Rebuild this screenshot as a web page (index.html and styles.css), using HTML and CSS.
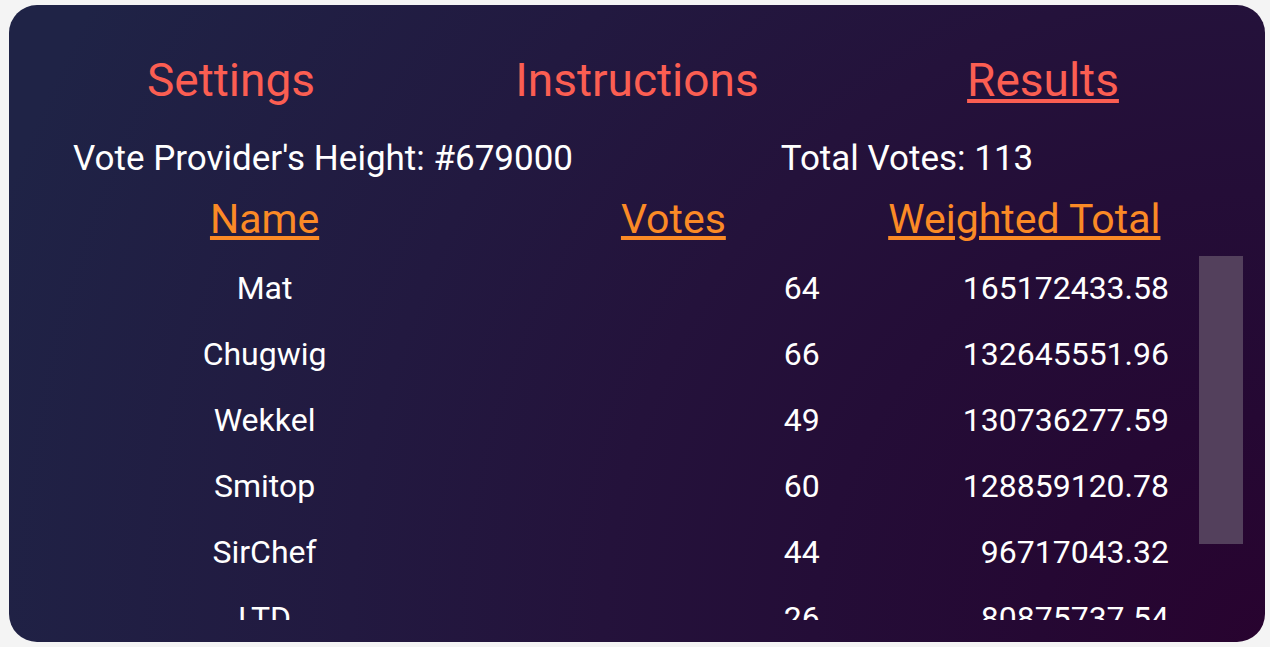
FILE: index.html
```html
<!DOCTYPE html>
<html lang="en">
<head>
<meta charset="utf-8">
<title>Vote Results</title>
<link rel="stylesheet" href="styles.css">
</head>
<body>
<main class="panel">
  <nav class="tabs">
    <a class="tab" href="#settings">Settings</a>
    <a class="tab" href="#instructions">Instructions</a>
    <a class="tab tab-active" href="#results" aria-current="page">Results</a>
  </nav>
  <div class="summary">
    <p class="stat">Vote Provider's Height: #679000</p>
    <p class="stat">Total Votes: 113</p>
  </div>
  <div class="results">
    <table class="votes">
      <thead>
        <tr><th class="name">Name</th><th class="count">Votes</th><th class="total">Weighted Total</th></tr>
      </thead>
      <tbody>
        <tr><td class="name">Mat</td><td class="count">64</td><td class="total">165172433.58</td></tr>
        <tr><td class="name">Chugwig</td><td class="count">66</td><td class="total">132645551.96</td></tr>
        <tr><td class="name">Wekkel</td><td class="count">49</td><td class="total">130736277.59</td></tr>
        <tr><td class="name">Smitop</td><td class="count">60</td><td class="total">128859120.78</td></tr>
        <tr><td class="name">SirChef</td><td class="count">44</td><td class="total">96717043.32</td></tr>
        <tr><td class="name">LTD</td><td class="count">26</td><td class="total">80875737.54</td></tr>
      </tbody>
    </table>
    <div class="track"><div class="thumb"></div></div>
  </div>
</main>
</body>
</html>
```

FILE: styles.css
```css
* { box-sizing: border-box; }
body {
  margin: 0;
  height: 100vh;
  padding: 5px 5px 5px 9px;
  background: #f4f4f4;
  font-family: Roboto, "Liberation Sans", sans-serif;
  color: #fff;
}
.panel {
  height: 100%;
  display: flex;
  flex-direction: column;
  padding: 47px 22px 22px;
  border-radius: 28px;
  background: radial-gradient(circle at 100% 100%, #28032f, #250833 16%, #240d37 32%, #24123b 47%, #221940 65%, #1f2346 95%);
  overflow: hidden;
}
.tabs {
  display: grid;
  grid-template-columns: 400fr 412fr 400fr;
  text-align: center;
  font-size: 46px;
  line-height: 56px;
}
.tab { color: #fb5e52; text-decoration: none; }
.tab-active { text-decoration: underline 4px; text-underline-offset: 3px; }
.summary {
  display: grid;
  grid-template-columns: 584fr 584fr 44fr;
  margin-top: 31px;
  text-align: center;
  font-size: 35px;
  line-height: 40px;
}
.stat { margin: 0; }
.results {
  flex: 1;
  min-height: 0;
  display: flex;
  margin-top: 10px;
  overflow: hidden;
}
.votes {
  flex: 1;
  border-collapse: collapse;
  table-layout: fixed;
  font-size: 32px;
}
.votes th {
  height: 66px;
  padding: 0;
  color: #fb8a26;
  font-size: 41px;
  font-weight: 400;
  line-height: 60px;
  vertical-align: top;
  text-decoration: underline 4px;
  text-underline-offset: 3px;
}
.votes td { height: 66px; padding: 0; }
.votes .name { width: 43.6%; padding-right: 29px; text-align: center; }
.votes .count { width: 25.7%; }
.votes .total { width: 30.7%; }
.votes th.total { padding-left: 60px; }
td.count, td.total { text-align: right; }
.track { width: 44px; margin: 67px 0 0 30px; }
.thumb { height: 79%; background: #53405c; }
```
